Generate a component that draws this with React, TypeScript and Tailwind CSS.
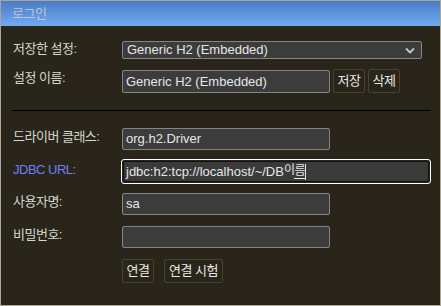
import React from "react";

const font = { fontFamily: '"Liberation Sans", "Noto Sans CJK KR", sans-serif' };

function Label({ children, blue }: { children: React.ReactNode; blue?: boolean }) {
  return (
    <div
      className={`w-[110px] shrink-0 pl-[1px] text-[13px] leading-[16px] tracking-[-0.5px] ${
        blue ? "text-[#6f7ff5]" : "text-[#d6d6d2]"
      }`}
    >
      {children}
    </div>
  );
}

function Field({ value, w }: { value: string; w: string }) {
  return (
    <div
      className={`${w} h-[22px] shrink-0 rounded-[2px] border border-[#858585] bg-[#3c3c3c] pl-[3px] flex items-center text-[13px] text-[#e6e6e6] overflow-hidden whitespace-nowrap`}
    >
      {value}
    </div>
  );
}

function Btn({ children, w, className = "" }: { children: React.ReactNode; w: string; className?: string }) {
  return (
    <div
      className={`${w} h-[24px] shrink-0 rounded-[2px] border border-[#48432f] bg-[#29251a] flex items-center justify-center text-[13px] tracking-[-0.5px] text-[#e8e8e4] ${className}`}
    >
      {children}
    </div>
  );
}

export default function App() {
  return (
    <div style={font} className="w-[441px] h-[306px] border border-[#a9a597] bg-[#29251a] flex flex-col overflow-hidden">
      <div className="h-[25px] shrink-0 bg-gradient-to-b from-[#4b7bc5] to-[#72abf1] pl-[11px] flex items-center text-[13px] text-[#bcc6d8] tracking-[-0.5px]">
        로그인
      </div>
      <div className="pl-[11px] pt-[15px] flex flex-col">
        <div className="flex items-start h-[18px]">
          <Label>저장한 설정:</Label>
          <div className="w-[300px] h-[18px] rounded-[2px] border border-[#858585] bg-[#3c3c3c] pl-[4px] pr-[4px] flex items-center justify-between text-[13px] text-[#e6e6e6]">
            <span>Generic H2 (Embedded)</span>
            <svg width="10" height="7" viewBox="0 0 10 7" className="mr-[2px]">
              <path d="M1 1.5 L5 5.5 L9 1.5" stroke="#c8c8c8" strokeWidth="1.8" fill="none" />
            </svg>
          </div>
        </div>
        <div className="mt-[10px] flex items-start h-[24px]">
          <div className="pt-[1px]">
            <Label>설정 이름:</Label>
          </div>
          <div className="mt-[1px]">
            <div className="w-[208px] h-[23px] rounded-[2px] border border-[#858585] bg-[#3c3c3c] pl-[3px] flex items-center text-[13px] text-[#e6e6e6]">
              Generic H2 (Embedded)
            </div>
          </div>
          <Btn w="w-[32px]" className="ml-[3px]">저장</Btn>
          <Btn w="w-[32px]" className="ml-[3px]">삭제</Btn>
        </div>
        <div className="mt-[17px] w-[419px] h-[1px] bg-black" />
        <div className="mt-[17px] flex items-start">
          <div className="pt-[1px]">
            <Label>드라이버 클래스:</Label>
          </div>
          <Field value="org.h2.Driver" w="w-[208px]" />
        </div>
        <div className="mt-[9px] flex items-start">
          <div className="pt-[3px]">
            <Label blue>JDBC URL:</Label>
          </div>
          <div className="-ml-[1px] w-[310px] h-[25px] rounded-[3px] border border-white p-[1px] shrink-0">
            <div className="w-full h-full rounded-[2px] border border-[#111] bg-[#3a3a3a] pl-[2px] flex items-center text-[13px] text-[#e6e6e6] whitespace-nowrap">
              <span>jdbc:h2:tcp://localhost/~/DB</span>
              <span className="text-[12px] -translate-y-[2px] tracking-[-0.5px]">이</span>
              <span className="text-[12px] border-b border-[#e6e6e6] leading-[14px] tracking-[-0.5px]">름</span>
              <span className="w-[1px] h-[16px] bg-[#e6e6e6]" />
            </div>
          </div>
        </div>
        <div className="mt-[9px] flex items-start">
          <div className="pt-[1px]">
            <Label>사용자명:</Label>
          </div>
          <Field value="sa" w="w-[208px]" />
        </div>
        <div className="mt-[11px] flex items-start">
          <div className="pt-[1px]">
            <Label>비밀번호:</Label>
          </div>
          <Field value="" w="w-[208px]" />
        </div>
        <div className="mt-[11px] flex items-start pl-[110px]">
          <Btn w="w-[32px]">연결</Btn>
          <Btn w="w-[59px]" className="ml-[10px]">연결 시험</Btn>
        </div>
      </div>
    </div>
  );
}
